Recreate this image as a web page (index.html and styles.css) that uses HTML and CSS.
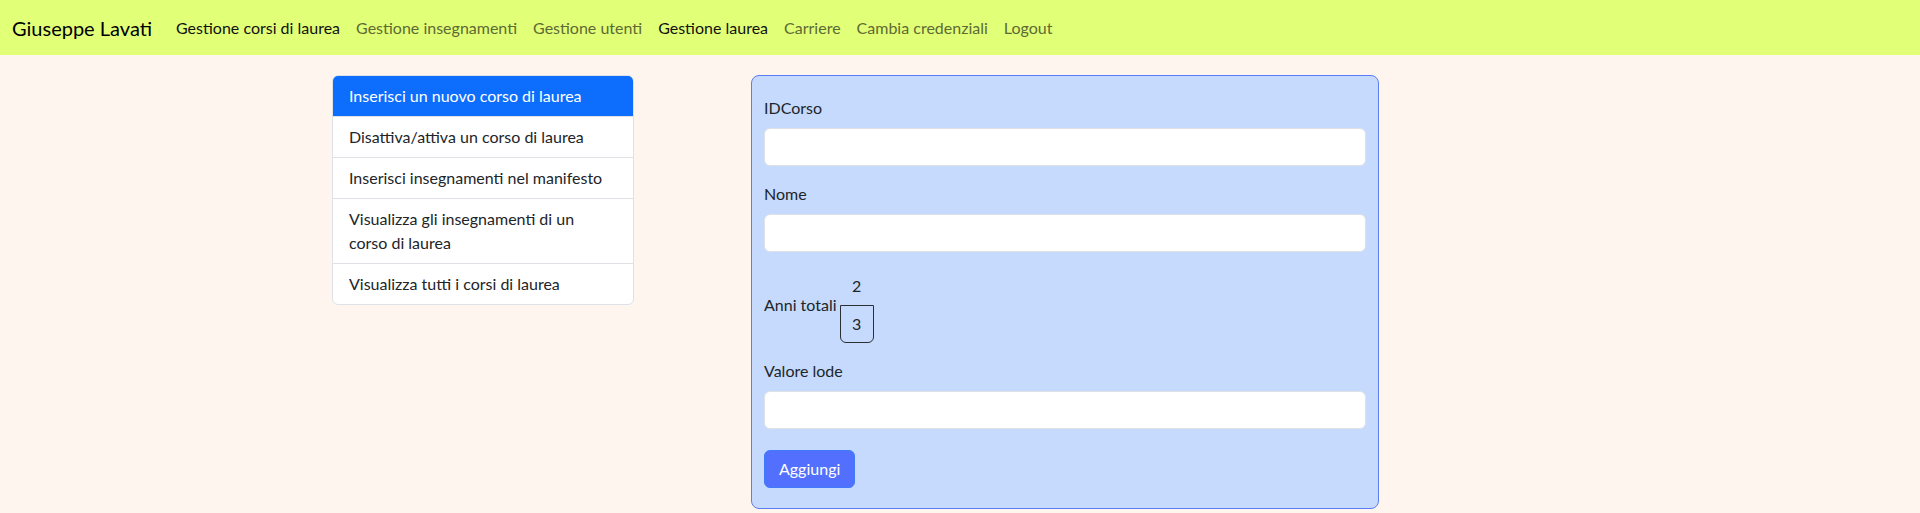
FILE: index.html
```html
<!DOCTYPE html>
<html lang="it">
<head>
<meta charset="utf-8">
<title>Gestione corsi di laurea</title>
<link rel="stylesheet" href="styles.css">
</head>
<body>
<nav class="navbar">
  <a class="brand" href="#">Giuseppe Lavati</a>
  <ul class="nav">
    <li><a class="nav-link active" href="#">Gestione corsi di laurea</a></li>
    <li><a class="nav-link" href="#">Gestione insegnamenti</a></li>
    <li><a class="nav-link" href="#">Gestione utenti</a></li>
    <li><a class="nav-link active" href="#">Gestione laurea</a></li>
    <li><a class="nav-link" href="#">Carriere</a></li>
    <li><a class="nav-link" href="#">Cambia credenziali</a></li>
    <li><a class="nav-link" href="#">Logout</a></li>
  </ul>
</nav>
<main class="page">
  <div class="list-group">
    <a class="list-item active" href="#">Inserisci un nuovo corso di laurea</a>
    <a class="list-item" href="#">Disattiva/attiva un corso di laurea</a>
    <a class="list-item" href="#">Inserisci insegnamenti nel manifesto</a>
    <a class="list-item" href="#">Visualizza gli insegnamenti di un corso di laurea</a>
    <a class="list-item" href="#">Visualizza tutti i corsi di laurea</a>
  </div>
  <form class="card-form">
    <div class="field">
      <label class="form-label" for="idcorso">IDCorso</label>
      <input class="form-control" id="idcorso" type="text">
    </div>
    <div class="field">
      <label class="form-label" for="nome">Nome</label>
      <input class="form-control" id="nome" type="text">
    </div>
    <div class="field years">
      <span class="years-label">Anni totali</span>
      <span class="years-pick">
        <span class="years-opt">2</span>
        <span class="years-opt selected">3</span>
      </span>
    </div>
    <div class="field">
      <label class="form-label" for="lode">Valore lode</label>
      <input class="form-control" id="lode" type="text">
    </div>
    <button class="btn" type="button">Aggiungi</button>
  </form>
</main>
</body>
</html>
```

FILE: styles.css
```css
* { box-sizing: border-box; }
html, body { margin: 0; }
body {
  background: #fff5ef;
  color: #212529;
  font-family: Lato, "Liberation Sans", sans-serif;
  font-size: 16px;
  line-height: 24px;
}
a { text-decoration: none; }

.navbar {
  display: flex;
  align-items: center;
  height: 55px;
  padding: 0 12px;
  background: #e2ff78;
}
.brand {
  color: #000;
  font-size: 20px;
  line-height: 30px;
  margin-right: 16px;
}
.nav {
  display: flex;
  list-style: none;
  margin: 0;
  padding: 0;
}
.nav-link {
  display: block;
  padding: 8px;
  color: #5d6a33;
}
.nav-link.active { color: #111; }

.page {
  display: flex;
  align-items: flex-start;
  padding: 20px 0 0 332px;
  gap: 117px;
}

.list-group {
  width: 302px;
  display: flex;
  flex-direction: column;
  border: 1px solid #dee2e6;
  border-radius: 6px;
  background: #fff;
  overflow: hidden;
}
.list-item {
  display: block;
  padding: 8px 22px 8px 16px;
  color: #212529;
  border-top: 1px solid #dee2e6;
}
.list-item:first-child { border-top: 0; }
.list-item.active {
  background: #0d6efd;
  color: #fff;
  margin: -1px -1px 0;
  padding: 9px 23px 8px 17px;
  border-radius: 6px 6px 0 0;
}

.card-form {
  width: 628px;
  background: #c5dafc;
  border: 1px solid #5b7cf4;
  border-radius: 8px;
  padding: 20px 12px;
  margin: 0;
}
.field { margin-bottom: 16px; }
.form-label {
  display: block;
  margin-bottom: 8px;
}
.form-control {
  display: block;
  width: 100%;
  height: 38px;
  border: 1px solid #dee2e6;
  border-radius: 6px;
  background: #fff;
  font: inherit;
  padding: 6px 12px;
}
.years {
  display: flex;
  align-items: flex-start;
  gap: 3px;
}
.years-label { margin-top: 25px; }
.years-pick {
  display: flex;
  flex-direction: column;
  align-items: center;
  padding-top: 6px;
}
.years-opt {
  display: block;
  width: 34px;
  text-align: center;
  line-height: 24px;
}
.years-opt.selected {
  height: 38px;
  margin-top: 7px;
  padding-top: 6px;
  border: 1px solid #2b2f33;
  border-radius: 0 0 6px 6px;
}
.btn {
  display: block;
  margin-top: 21px;
  height: 38px;
  padding: 6px 14px;
  font: inherit;
  color: #fff;
  background: #5270fd;
  border: 1px solid #3d7bf9;
  border-radius: 6px;
}
```
